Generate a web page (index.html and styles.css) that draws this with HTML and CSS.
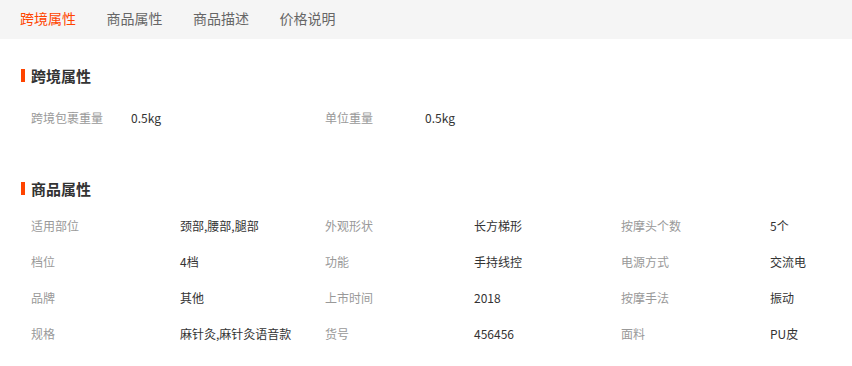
FILE: index.html
```html
<!DOCTYPE html>
<html lang="zh-CN">

<head>
    <meta charset="UTF-8">
    <meta name="viewport" content="width=device-width, initial-scale=1.0">
    <title>商品详情</title>
    <link rel="stylesheet" href="styles.css">
</head>

<body>
    <div class="tabs">
        <a class="tab active">跨境属性</a>
        <a class="tab">商品属性</a>
        <a class="tab">商品描述</a>
        <a class="tab">价格说明</a>
    </div>

    <div class="section section-cross">
        <h2 class="section-title">跨境属性</h2>
        <ul class="attr-list narrow">
            <li class="attr"><span class="attr-name">跨境包裹重量</span><span class="attr-value">0.5kg</span></li>
            <li class="attr"><span class="attr-name">单位重量</span><span class="attr-value">0.5kg</span></li>
        </ul>
    </div>

    <div class="section section-goods">
        <h2 class="section-title">商品属性</h2>
        <ul class="attr-list">
            <li class="attr"><span class="attr-name">适用部位</span><span class="attr-value">颈部,腰部,腿部</span></li>
            <li class="attr"><span class="attr-name">外观形状</span><span class="attr-value">长方梯形</span></li>
            <li class="attr"><span class="attr-name">按摩头个数</span><span class="attr-value">5个</span></li>
            <li class="attr"><span class="attr-name">档位</span><span class="attr-value">4档</span></li>
            <li class="attr"><span class="attr-name">功能</span><span class="attr-value">手持线控</span></li>
            <li class="attr"><span class="attr-name">电源方式</span><span class="attr-value">交流电</span></li>
            <li class="attr"><span class="attr-name">品牌</span><span class="attr-value">其他</span></li>
            <li class="attr"><span class="attr-name">上市时间</span><span class="attr-value">2018</span></li>
            <li class="attr"><span class="attr-name">按摩手法</span><span class="attr-value">振动</span></li>
            <li class="attr"><span class="attr-name">规格</span><span class="attr-value">麻针灸,麻针灸语音款</span></li>
            <li class="attr"><span class="attr-name">货号</span><span class="attr-value">456456</span></li>
            <li class="attr"><span class="attr-name">面料</span><span class="attr-value">PU皮</span></li>
        </ul>
    </div>
</body>

</html>
```

FILE: styles.css
```css
body {
    margin: 0;
    padding: 0;
    background-color: #fff;
    font-family: "Noto Sans CJK SC", "Noto Sans", sans-serif;
    color: #333;
}

/* Tab bar */
.tabs {
    display: flex;
    gap: 30.5px;
    height: 39px;
    padding-left: 20px;
    background-color: #f5f5f5;
}

.tab {
    font-size: 14px;
    line-height: 37px;
    color: #666;
    cursor: pointer;
}

.tab.active {
    color: #ff4400; /* Orange */
}

/* Section headings with the orange marker */
.section-title {
    margin: 0 0 0 21px;
    padding-left: 6px;
    border-left: 4px solid #ff4400;
    font-size: 15px;
    font-weight: bold;
    line-height: 13px;
    height: 13px;
    color: #333;
}

.section-cross {
    padding-top: 30px;
}

.section-goods {
    padding-top: 46px;
}

/* Name / value pairs, three per row */
.attr-list {
    list-style: none;
    margin: 0;
    padding: 0 0 0 31px;
    display: grid;
    grid-template-columns: 294px 296px 1fr;
    font-size: 12px;
}

.section-cross .attr-list {
    margin-top: 18px;
}

.section-goods .attr-list {
    margin-top: 13px;
}

.attr {
    display: flex;
    height: 36px;
    line-height: 36px;
}

.attr-name {
    width: 149px;
    color: #999;
}

.narrow .attr-name {
    width: 100px;
}

.attr-value {
    color: #333;
}
```
